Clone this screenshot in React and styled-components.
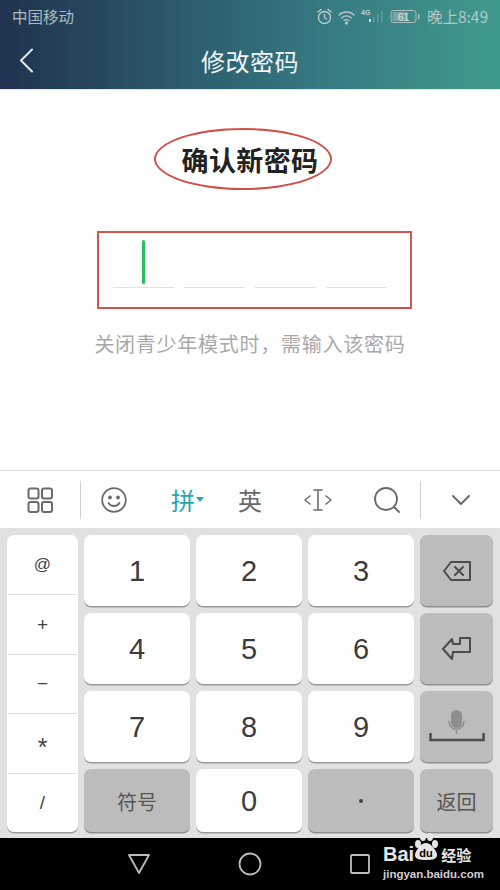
import React from "react";
import styled, { createGlobalStyle } from "styled-components";

const CJK = `"Noto Sans CJK SC", "Liberation Sans", sans-serif`;

const Global = createGlobalStyle`
  html, body { margin: 0; padding: 0; background: #fff; }
  body { font-family: ${CJK}; }
  * { box-sizing: border-box; }
`;

const Page = styled.div`
  position: relative;
  width: 500px;
  height: 890px;
  overflow: hidden;
  display: flex;
  flex-direction: column;
`;

// Header
const Header = styled.header`
  height: 90px;
  flex: none;
  background: linear-gradient(90deg, #20324f 0%, #2a5468 30%, #367a82 65%, #409b8c 100%);
  border-bottom: 1px solid #d6ecec;
`;
const StatusBar = styled.div`
  height: 32px;
  padding: 0 12px;
  display: flex;
  align-items: center;
  justify-content: space-between;
  color: #a9bcc2;
  font-size: 15.5px;
`;
const StatusRight = styled.div`
  display: flex;
  align-items: center;
  gap: 4px;
  font-size: 15.5px;
  color: #b3c8c8;
`;
const Clock = styled.span`
  margin-left: 2px;
`;
const NavBar = styled.div`
  height: 57px;
  position: relative;
  display: flex;
  align-items: center;
  justify-content: center;
  color: #f1f5f5;
  font-size: 24px;
  letter-spacing: 0.5px;
`;
const Back = styled.svg`
  position: absolute;
  left: 19px;
  top: 16px;
`;

// Password form
const Body = styled.main`
  height: 380px;
  flex: none;
  background: #fff;
  display: flex;
  flex-direction: column;
  align-items: center;
  padding-top: 38px;
`;
const TitleWrap = styled.div`
  width: 178px;
  height: 62px;
  margin-right: 14px;
  border: 2px solid #cf5048;
  border-radius: 50%;
  display: flex;
  align-items: center;
  justify-content: center;
  padding-left: 14px;
`;
const Title = styled.h1`
  margin: 0;
  font-size: 27px;
  letter-spacing: 0.4px;
  font-weight: 700;
  color: #222;
  white-space: nowrap;
`;
const CodeBox = styled.div`
  width: 315px;
  height: 78px;
  margin-top: 41px;
  margin-left: 9px;
  border: 2px solid #d4534b;
  padding: 0 0 19px 14px;
  display: flex;
  align-items: flex-end;
  gap: 10px;
`;
const Slot = styled.div`
  position: relative;
  width: 61px;
  height: 1px;
  background: #e2e2e2;
`;
const Cursor = styled.span`
  position: absolute;
  left: 29px;
  bottom: 4px;
  width: 3px;
  height: 44px;
  border-radius: 2px;
  background: #22c25d;
`;
const Hint = styled.p`
  margin: 20px 0 0;
  font-size: 20px;
  line-height: 30px;
  letter-spacing: 0.75px;
  color: #a9a9a9;
  white-space: nowrap;
`;

// Keyboard toolbar
const Toolbar = styled.div`
  height: 58px;
  flex: none;
  background: #fff;
  border-top: 1.5px solid #dedede;
  display: grid;
  grid-template-columns: 80px 1px 65px 83px 42px 94px 44px 1fr 1px 79px;
  align-items: center;
  justify-items: center;
  color: #6a6a6a;
  font-size: 24px;
`;
const Divider = styled.div`
  width: 1px;
  height: 38px;
  background: #d0d0d0;
`;
const PinyinTab = styled.span`
  display: flex;
  align-items: center;
  gap: 1px;
  color: #25a8ad;
  font-size: 24px;
`;
const Caret = styled.i`
  width: 0;
  height: 0;
  border: 4px solid transparent;
  border-top: 5px solid #25a8ad;
  border-bottom: 0;
`;

// Keyboard
const Keyboard = styled.div`
  height: 310px;
  flex: none;
  background: #e1e1e1;
  padding: 7px 7px 0;
  display: grid;
  grid-template-columns: 71px repeat(3, 106px) 73px;
  grid-template-rows: 71px 71px 71px 63px;
  column-gap: 6px;
  row-gap: 7px;
`;
const SymbolColumn = styled.div`
  grid-row: 1 / 5;
  grid-column: 1;
  background: #fff;
  border-radius: 7px;
  box-shadow: 0 1.5px 0 #9b9b9b;
  display: grid;
  grid-template-rows: repeat(5, 59.4px);
`;
const SymbolKey = styled.div`
  min-height: 0;
  display: flex;
  align-items: center;
  justify-content: center;
  padding-top: ${(p) => p.$drop || 0}px;
  font-family: "Liberation Sans", sans-serif;
  font-size: ${(p) => p.$size}px;
  color: #444;
  & + & {
    border-top: 1px solid #dcdcdc;
    margin: 0 1px;
  }
`;
const Key = styled.div`
  background: ${(p) => (p.$dark ? "#bcbcbc" : "#fff")};
  border-radius: 7px;
  box-shadow: 0 1.5px 0 ${(p) => (p.$dark ? "#8f8f8f" : "#9b9b9b")};
  display: flex;
  align-items: center;
  justify-content: center;
  padding-top: 1px;
  color: #3c3c3c;
  font-family: "Liberation Sans", sans-serif;
  font-size: 29px;
`;
const KeyLabel = styled.span`
  font-family: ${CJK};
  font-size: 20px;
  color: #555;
`;
const Dot = styled.i`
  width: 4px;
  height: 4px;
  border-radius: 50%;
  background: #444;
`;

// Bottom nav
const NavKeys = styled.nav`
  height: 52px;
  flex: none;
  background: #000;
  position: relative;
  display: flex;
  align-items: center;
  padding-left: 127px;
  gap: 87px;
`;
const Watermark = styled.div`
  position: absolute;
  left: 383px;
  top: -6px;
  width: 112px;
  color: #e6e6e6;
  font-family: "Liberation Sans", sans-serif;
`;
const BrandRow = styled.div`
  display: flex;
  align-items: center;
  height: 30px;
  margin-top: 7px;
  font-size: 20px;
  font-weight: 700;
  white-space: nowrap;
`;
const BrandCn = styled.span`
  font-family: ${CJK};
  font-size: 15px;
  margin-left: 1px;
`;
const BrandUrl = styled.div`
  font-size: 11.5px;
  font-weight: 700;
  color: #cfcfcf;
  margin-top: -1px;
  white-space: nowrap;
`;
const Paw = styled.svg`
  margin: -10px 0 0 -2px;
`;

const Icon = ({ w = 26, h = 26, sw = 2, children, stroke = "#6a6a6a", vb }) => (
  <svg width={w} height={h} viewBox={vb || `0 0 ${w} ${h}`} fill="none" stroke={stroke} strokeWidth={sw} strokeLinecap="round" strokeLinejoin="round">
    {children}
  </svg>
);

const digits = ["1", "2", "3", null, "4", "5", "6", null, "7", "8", "9", null];
const symbols = [
  { s: "@", size: 17 },
  { s: "+", size: 19 },
  { s: "−", size: 19 },
  { s: "*", size: 25, drop: 9 },
  { s: "/", size: 19 },
];

export default function App() {
  return (
    <Page>
      <Global />
      <Header>
        <StatusBar>
          <span>中国移动</span>
          <StatusRight>
            <Icon w={17} h={17} sw={1.4} stroke="#b9cdcd">
              <circle cx="8.5" cy="9.5" r="6" />
              <path d="M8.5 6.5v3.2l2 1.3M2 4l3-2.5M15 4l-3-2.5" />
            </Icon>
            <Icon w={19} h={17} sw={1.3} stroke="#b0c6c6">
              <path d="M2 7c4-4 11-4 15 0M4.5 10c3-2.5 7-2.5 10 0M7 12.5c1.5-1 3.500-1 5 0" />
              <circle cx="9.500" cy="15" r="1" fill="#b0c6c6" />
            </Icon>
            <svg width="26" height="17" viewBox="0 0 26 17">
              <text x="1" y="7" fontSize="7" fontWeight="700" fill="#c0d2d2" fontFamily="Liberation Sans">4G</text>
              <rect x="9" y="11" width="2" height="3" fill="#d0dcdc" />
              <rect x="13" y="9" width="1.500" height="5" fill="#6d9a9a" />
              <rect x="17" y="6" width="1.500" height="8" fill="#6d9a9a" />
              <rect x="21" y="3" width="1.500" height="11" fill="#6d9a9a" />
            </svg>
            <svg width="31" height="15" viewBox="0 0 31 15">
              <rect x="1" y="1.500" width="25" height="12" rx="2.500" fill="none" stroke="#a9c0c0" strokeWidth="1" />
              <rect x="2.500" y="3" width="15" height="9" rx="1" fill="#7fa3a3" />
              <text x="13.500" y="11.500" textAnchor="middle" fontSize="10.500" fontFamily="Liberation Sans" fill="#d5e2e2">61</text>
              <rect x="28" y="5" width="1.500" height="5" fill="#a9c0c0" />
            </svg>
            <Clock>晚上8:49</Clock>
          </StatusRight>
        </StatusBar>
        <NavBar>
          <Back width="15" height="25" viewBox="0 0 15 25" fill="none" stroke="#e4ecec" strokeWidth="2" strokeLinecap="round" strokeLinejoin="round">
            <path d="M13 1.500 2 12.500l11 11" />
          </Back>
          修改密码
        </NavBar>
      </Header>

      <Body>
        <TitleWrap>
          <Title>确认新密码</Title>
        </TitleWrap>
        <CodeBox>
          <Slot><Cursor /></Slot>
          <Slot />
          <Slot />
          <Slot />
        </CodeBox>
        <Hint>关闭青少年模式时，需输入该密码</Hint>
      </Body>

      <Toolbar>
        <Icon w={26} h={26}>
          <rect x="1.500" y="1.500" width="10" height="10" rx="2" />
          <rect x="15" y="1.500" width="10" height="10" rx="2" />
          <rect x="1.500" y="15" width="10" height="10" rx="2" />
          <rect x="15" y="15" width="10" height="10" rx="2" />
        </Icon>
        <Divider />
        <Icon w={26} h={26} sw={1.800}>
          <circle cx="13" cy="13" r="11.800" />
          <circle cx="9" cy="10.500" r="1" fill="#6a6a6a" />
          <circle cx="17" cy="10.500" r="1" fill="#6a6a6a" />
          <path d="M7.500 16c2.500 4 8.500 4 11 0" />
        </Icon>
        <PinyinTab>拼<Caret /></PinyinTab>
        <span>英</span>
        <Icon w={30} h={26} sw={1.600}>
          <path d="M7 9 2 13l5 4M23 9l5 4-5 4M11 3h8M11 23h8M15 3v20" />
        </Icon>
        <Icon w={28} h={28} sw={1.800}>
          <circle cx="13" cy="13" r="11" />
          <path d="m21 21 5 5" />
        </Icon>
        <span />
        <Divider />
        <Icon w={20} h={12}>
          <path d="m2 2 8 8 8-8" />
        </Icon>
      </Toolbar>

      <Keyboard>
        <SymbolColumn>
          {symbols.map(({ s, size, drop }) => (
            <SymbolKey key={s} $size={size} $drop={drop}>{s}</SymbolKey>
          ))}
        </SymbolColumn>
        {digits.map((d, i) => {
          if (d) return <Key key={d}>{d}</Key>;
          if (i === 3)
            return (
              <Key key="del" $dark>
                <Icon w={30} h={22} stroke="#4c4c4c">
                  <path d="M9 2h19v18H9L2 11z" />
                  <path d="m13 7 8 8M21 7l-8 8" />
                </Icon>
              </Key>
            );
          if (i === 7)
            return (
              <Key key="enter" $dark>
                <Icon w={30} h={24} stroke="#4c4c4c">
                  <path d="M1 12 10 2l1 5h7V1h10v14H11l-1 7z" />
                </Icon>
              </Key>
            );
          return (
            <Key key="space" $dark>
              <svg width="56" height="36" viewBox="0 0 56 36" fill="none">
                <rect x="22" y="1" width="11" height="18" rx="5.500" fill="#8d8d8d" />
                <path d="M20 12c0 11 15 11 15 0M27.500 20v5" stroke="#8d8d8d" strokeWidth="1.500" />
                <path d="M1.500 24v7h53v-7" stroke="#4c4c4c" strokeWidth="2.500" />
              </svg>
            </Key>
          );
        })}
        <Key $dark><KeyLabel>符号</KeyLabel></Key>
        <Key>0</Key>
        <Key $dark><Dot /></Key>
        <Key $dark><KeyLabel>返回</KeyLabel></Key>
      </Keyboard>

      <NavKeys>
        <Icon w={24} h={22} stroke="#bdbdbd" sw={1.800}>
          <path d="M2 2h20L12 20z" />
        </Icon>
        <Icon w={24} h={24} stroke="#bdbdbd" sw={1.800}>
          <circle cx="12" cy="12" r="10.500" />
        </Icon>
        <Icon w={22} h={22} stroke="#bdbdbd" sw={1.800}>
          <rect x="2" y="2" width="18" height="18" rx="1" />
        </Icon>
        <Watermark>
          <BrandRow>
            Bai
            <Paw width="28" height="36" viewBox="0 0 28 36">
              <ellipse cx="6" cy="13" rx="3" ry="4" fill="#e6e6e6" />
              <ellipse cx="11" cy="6" rx="3" ry="4" fill="#e6e6e6" />
              <ellipse cx="18" cy="6" rx="3" ry="4" fill="#e6e6e6" />
              <ellipse cx="23" cy="13" rx="3" ry="4" fill="#e6e6e6" />
              <path d="M14 12c-5 0-11 8-11 12 0 4 4 5 11 5s11-1 11-5c0-4-6-12-11-12z" fill="#e6e6e6" />
              <text x="14" y="26" textAnchor="middle" fontSize="11" fontWeight="700" fill="#000" fontFamily="Liberation Sans">du</text>
            </Paw>
            <BrandCn>经验</BrandCn>
          </BrandRow>
          <BrandUrl>jingyan.baidu.com</BrandUrl>
        </Watermark>
      </NavKeys>
    </Page>
  );
}
